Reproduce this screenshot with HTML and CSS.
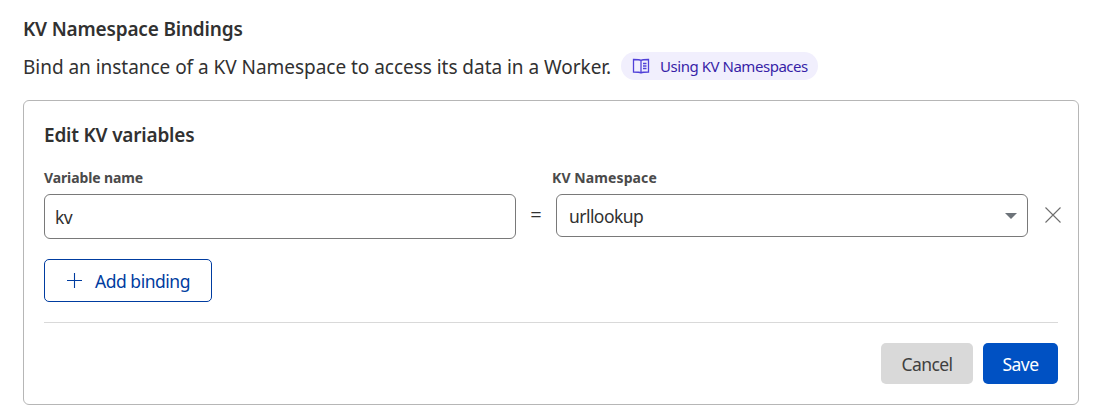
FILE: index.html
```html
<!DOCTYPE html>
<html lang="en">
<head>
<meta charset="utf-8">
<title>KV Namespace Bindings</title>
<link rel="stylesheet" href="styles.css">
</head>
<body>
<main class="page">
<h2 class="title"><span class="t-title">KV Namespace Bindings</span></h2>
<div class="intro">
<p class="desc"><span class="t-desc">Bind an instance of a KV Namespace to access its data in a Worker.</span></p>
<a class="pill"><svg class="book" viewBox="0 0 18 18" width="18" height="18"><path d="M9 3.500C7.500 2.500 6.500 2.500 1.500 2.500v12.500C6.500 15 7.500 15 9 16c1.500-1 2.500-1 7.500-1V2.500C11.500 2.500 10.500 2.500 9 3.500zM9 3.500V16M11 6.500h3.500M11 9h3.500M11 11.500h3.500"/></svg><span class="t-pill">Using KV Namespaces</span></a>
</div>
<section class="card">
<h3 class="heading"><span class="t-heading">Edit KV variables</span></h3>
<div class="fields">
<div class="field"><label class="label"><span class="t-var">Variable name</span></label><div class="control input"><span class="t-kv">kv</span></div></div>
<span class="equals">=</span>
<div class="field"><label class="label label-ns"><span class="t-ns">KV Namespace</span></label><div class="control select"><span class="t-url">urllookup</span><svg class="caret" width="12" height="6" viewBox="0 0 12 6"><path d="M0 0h12L6 6z"/></svg></div></div>
<svg class="remove" width="16" height="16" viewBox="0 0 16 16"><path d="M.5.5l15 15M15.500.5l-15 15"/></svg>
</div>
<button class="add"><svg class="plus" width="16" height="16" viewBox="0 0 16 16"><path d="M7.500 1v15M0 8.500h15"/></svg><span class="t-add">Add binding</span></button>
<footer class="actions"><button class="btn cancel"><span class="t-cancel">Cancel</span></button><button class="btn save"><span class="t-save">Save</span></button></footer>
</section>
</main>
</body>
</html>
```
FILE: styles.css
```css
*{box-sizing:border-box}
body{margin:0;background:#fff;color:#313131;font:19px/24px "Noto Sans","Open Sans",sans-serif}
h2,h3,p{margin:0}
span{white-space:nowrap}
.page{padding:17px 16px 12px 23px;height:417px;display:flex;flex-direction:column}
.title{font-size:19px;line-height:24px;font-weight:600;letter-spacing:-.18px}
.intro{display:flex;align-items:center;gap:10px;height:28px;margin-top:11px}
.desc{width:588px;font-size:19px;letter-spacing:-.035px;padding-top:2px}
.pill{display:flex;align-items:center;gap:10px;width:197px;height:28px;padding-left:11px;border-radius:14px;background:#f1effd;color:#381fa8;font-size:15px;letter-spacing:-.46px}
.book,.plus,.remove{fill:none;stroke:currentColor;stroke-width:1.1}
.book{color:#5141d8;stroke-width:1.3}
.card{flex:1;margin-top:20px;border:1px solid #b6b6b6;border-radius:6px;padding:22px 20px 20px}
.heading{font-size:19px;line-height:24px;font-weight:600;letter-spacing:-.2px}
.fields{display:flex;height:71px;margin-top:21px;margin-right:-4px}
.field{width:472px;flex:none}
.label{display:block;height:20px;margin-bottom:6px;font-size:14px;line-height:20px;font-weight:700;letter-spacing:-.12px;color:#4a4a4a}
.label-ns{margin-left:-4px;letter-spacing:.1px}
.control{display:flex;align-items:center;border:1px solid #797979;border-radius:6px;font-size:17.5px;letter-spacing:-.55px}
.input{height:45px;padding:1px 0 0 10px}
.select{height:43px;padding:0 10px 0 12px;justify-content:space-between}
.caret{fill:#6d7379}
.equals{width:40px;flex:none;text-align:center;padding-top:35px;font-size:20px}
.remove{margin:39px 0 0 17px;flex:none;color:#6d6d6d}
.add,.btn{display:flex;align-items:center;justify-content:center;font:17.5px/24px "Noto Sans",sans-serif;border-radius:5px;padding:0}
.add{width:168px;height:43px;margin-top:20px;border:1px solid #003ca0;background:#fff;color:#003ca0;gap:12px;letter-spacing:-.48px;padding-left:1px}
.plus{margin-top:-1px}
.actions{display:flex;justify-content:flex-end;gap:10px;border-top:1px solid #d9d9d9;margin-top:20px;padding-top:20px}
.btn{height:41px;border:0;letter-spacing:-.55px}
.cancel{width:92px;background:#d9d9d9;color:#3f3f3f}
.save{width:75px;background:#0051c3;color:#fff}
```
